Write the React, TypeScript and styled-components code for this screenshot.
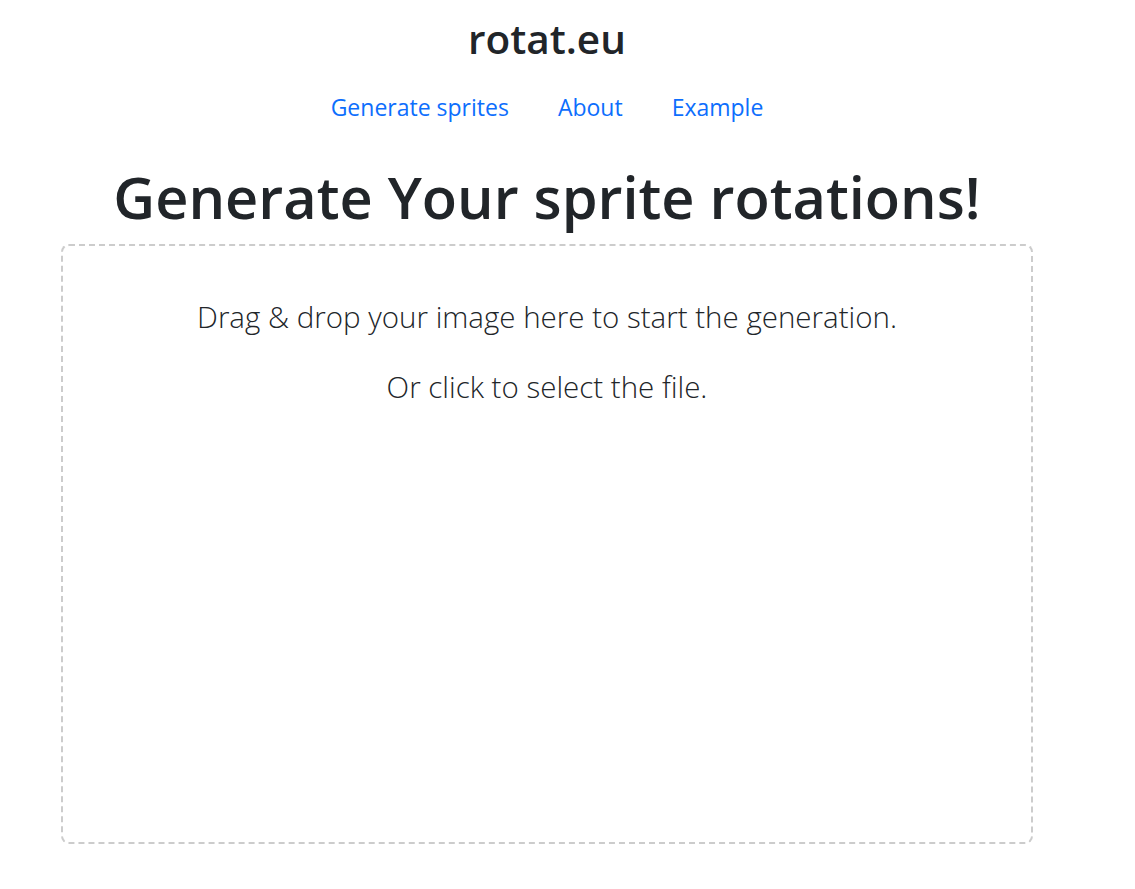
import React from "react";
import styled, { createGlobalStyle } from "styled-components";

const Global = createGlobalStyle`
  html, body { margin: 0; padding: 0; background: #fff; }
  body {
    font-family: "Open Sans", "Noto Sans", sans-serif;
    color: #212529;
  }
`;

const Page = styled.div`
  width: 1094px;
  display: flex;
  flex-direction: column;
  align-items: center;
  padding-top: 15px;
`;

const SiteTitle = styled.h1`
  margin: 0;
  font-size: 40.5px;
  font-weight: 600;
  line-height: 1.2;
  color: #212529;
`;

const Nav = styled.nav`
  display: flex;
  gap: 49px;
  margin-top: 26px;
`;

const NavLink = styled.a`
  font-size: 23px;
  line-height: 1.5;
  color: #0d6efd;
  text-decoration: none;
  cursor: pointer;
`;

const Heading = styled.h2`
  margin: 38px 0 0;
  font-size: 57.7px;
  font-weight: 600;
  line-height: 1.2;
  color: #212529;
`;

const DropZone = styled.div`
  box-sizing: border-box;
  align-self: stretch;
  margin: 13px 61px 0;
  height: 600px;
  border: 2px dashed #cccccc;
  border-radius: 8px;
  display: flex;
  flex-direction: column;
  align-items: center;
  padding-top: 50px;
  gap: 28px;
  cursor: pointer;
`;

const DropText = styled.p`
  margin: 0;
  font-size: 29.5px;
  font-weight: 300;
  line-height: 1.4;
  color: #212529;
`;

export default function App() {
  return (
    <>
      <Global />
      <Page>
        <SiteTitle>rotat.eu</SiteTitle>
        <Nav>
          <NavLink>Generate sprites</NavLink>
          <NavLink>About</NavLink>
          <NavLink>Example</NavLink>
        </Nav>
        <Heading>Generate Your sprite rotations!</Heading>
        <DropZone>
          <DropText>Drag &amp; drop your image here to start the generation.</DropText>
          <DropText>Or click to select the file.</DropText>
        </DropZone>
      </Page>
    </>
  );
}
